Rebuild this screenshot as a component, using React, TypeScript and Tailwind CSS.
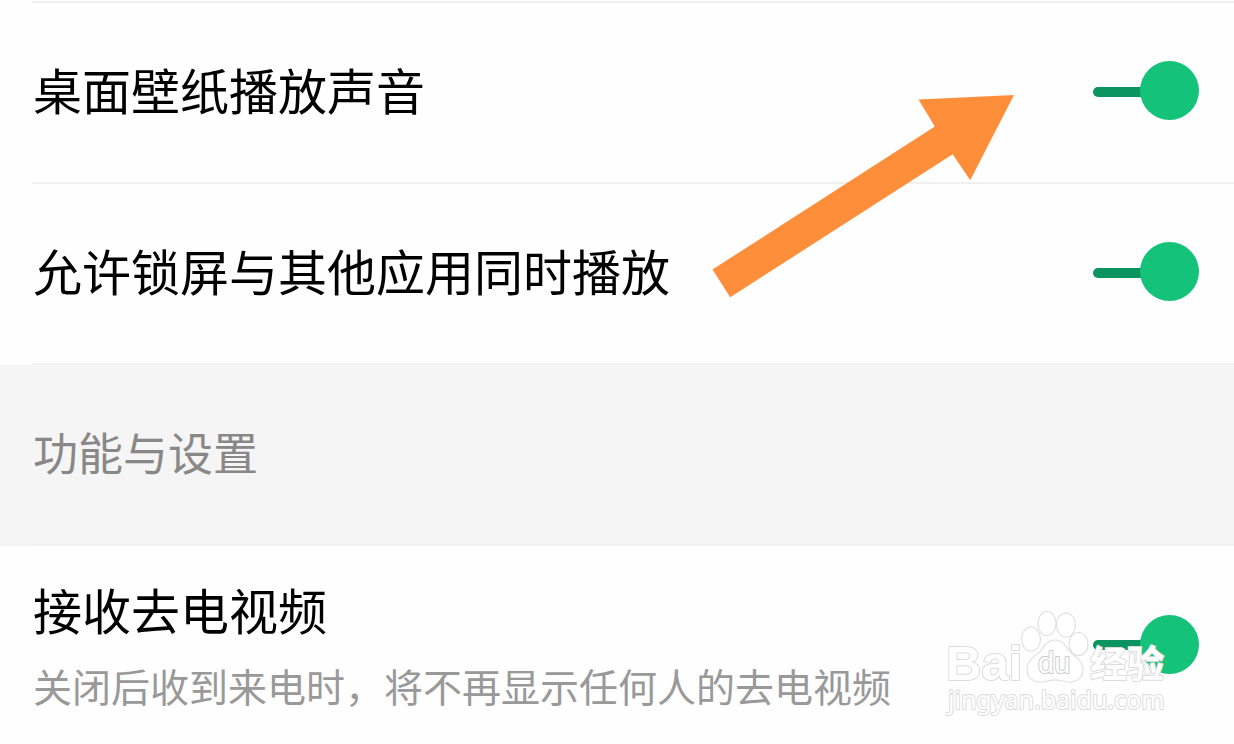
import { useId, useState } from "react";

type SwitchProps = { id: string; descriptionId?: string };

function Switch({ id, descriptionId }: SwitchProps) {
  const [on, setOn] = useState(true);
  return (
    <span className="relative flex shrink-0 items-center">
      <input
        id={id}
        type="checkbox"
        role="switch"
        checked={on}
        onChange={(event) => setOn(event.target.checked)}
        aria-describedby={descriptionId}
        className="peer absolute inset-0 z-10 h-full w-full cursor-pointer opacity-0"
      />
      <span className="-mr-2 mt-0.5 h-2.5 w-[55px] rounded-full bg-gray-300 peer-checked:bg-[#0c9460]" />
      <span className="size-[59px] rounded-full bg-gray-100 peer-checked:bg-[#14c27a]" />
    </span>
  );
}

function Divider() {
  return <div className="ml-8 h-0.5 bg-[#f0f0f0]" />;
}

type RowProps = { title: string; description?: string };

function SettingRow({ title, description }: RowProps) {
  const id = useId();
  const descriptionId = description ? `${id}-description` : undefined;
  return (
    <div
      className={
        description
          ? "flex items-center justify-between pb-0.5 pl-[33px] pr-[35px]"
          : "flex items-center justify-between pb-1 pl-[33px] pr-[35px]"
      }
    >
      <div
        className={
          description
            ? "flex flex-col gap-5 pt-[33px] pb-[31px]"
            : "flex flex-col pt-14 pb-[59px]"
        }
      >
        <label htmlFor={id} className="text-[49px] leading-[60px] text-black">
          {title}
        </label>
        {description && (
          <p id={descriptionId} className="text-[39px] leading-[52px] text-[#999999]">
            {description}
          </p>
        )}
      </div>
      <Switch id={id} descriptionId={descriptionId} />
    </div>
  );
}

function PointerArrow() {
  return (
    <svg
      className="pointer-events-none absolute top-[90px] right-[214px]"
      width="310"
      height="212"
      viewBox="710 90 310 212"
      aria-hidden="true"
    >
      <path
        d="M712.5 269.5 730.2 297.3 952.7 154.2 970.2 180.3 1014 95 918.5 99.6 934.8 126.6Z"
        fill="#ff8e3b"
      />
    </svg>
  );
}

function Watermark() {
  return (
    <svg
      className="pointer-events-none absolute right-[60px] bottom-6"
      width="230"
      height="112"
      viewBox="14 18 230 112"
      role="img"
      aria-label="Baidu 经验"
    >
      <g fill="#ffffff" stroke="#dcdcdc" strokeWidth="2" strokeLinejoin="round" className="[paint-order:stroke]">
        <text x="16" y="90" className="font-['Liberation_Sans',sans-serif] text-[49px] font-bold">
          Bai
        </text>
        <ellipse cx="101" cy="49" rx="9" ry="11.5" />
        <ellipse cx="117" cy="33.5" rx="8.5" ry="11.5" />
        <ellipse cx="136" cy="35" rx="9" ry="11.5" />
        <ellipse cx="148.5" cy="54" rx="9" ry="11" />
        <path d="M125 50.5C119 50.5 115 55 112 60C109 65 98 69 97.5 78C97 87 103 91.5 110 91.5C116 91.5 119 89.5 125 89.5C131 89.5 134 91.5 140 91.5C147 91.5 153 87 152.5 78C152 70 141 65 138 60C135 55 131 50.5 125 50.5Z" />
        <text x="108" y="83" className="font-['Liberation_Sans',sans-serif] text-[29px]" stroke="#cccccc">
          du
        </text>
        <text x="160" y="88" className="font-['Noto_Sans_CJK_SC',sans-serif] text-[37px] font-bold">
          经验
        </text>
        <text x="18" y="119" className="font-['Noto_Sans',sans-serif] text-[25px]">
          jingyan.baidu.com
        </text>
      </g>
    </svg>
  );
}

export default function App() {
  return (
    <main className="relative min-h-screen overflow-hidden bg-[#fefefe] pt-px font-['Noto_Sans_CJK_SC',sans-serif]">
      <Divider />
      <SettingRow title="桌面壁纸播放声音" />
      <Divider />
      <SettingRow title="允许锁屏与其他应用同时播放" />
      <Divider />
      <section className="bg-[#f5f5f5]">
        <h2 className="pt-[57px] pb-[62px] pl-[33px] text-[45px] leading-[60px] text-[#888888]">
          功能与设置
        </h2>
        <Divider />
      </section>
      <SettingRow title="接收去电视频" description="关闭后收到来电时，将不再显示任何人的去电视频" />
      <PointerArrow />
      <Watermark />
    </main>
  );
}
